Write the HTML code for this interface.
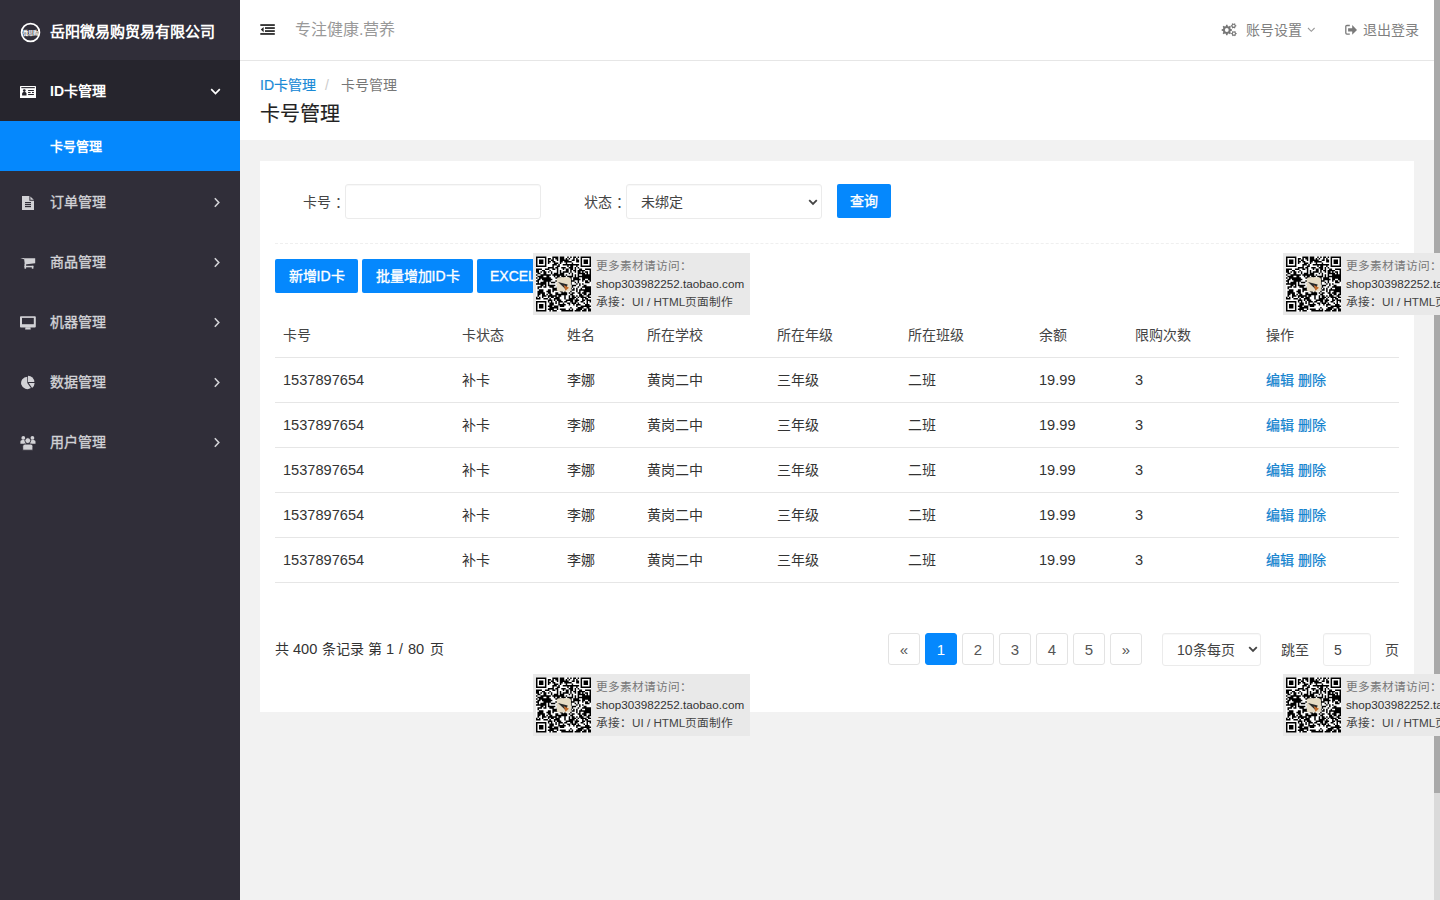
<!DOCTYPE html>
<html lang="zh-CN"><head><meta charset="utf-8">
<title>卡号管理</title>
<style>
*{margin:0;padding:0;box-sizing:border-box}
html,body{width:1440px;height:900px;overflow:hidden}
body{font-family:"Liberation Sans",sans-serif;font-size:14px;color:#333;background:#f2f2f2;position:relative}
.a{position:absolute;white-space:nowrap;line-height:20px}
#side{position:absolute;left:0;top:0;width:240px;height:900px;background:#302e39}
#m1{position:absolute;left:0;top:60px;width:240px;height:61px;background:#26252d}
#sub1{position:absolute;left:0;top:121px;width:240px;height:50px;background:#0588fd}
.mt{color:#d2d2d6;font-size:14px;left:50px;-webkit-text-stroke:0.35px #d2d2d6}
.dg{font-size:14.6px}
#hdr{position:absolute;left:240px;top:0;width:1194px;height:61px;background:#fff;border-bottom:1px solid #e6e6e6}
#crumb{position:absolute;left:240px;top:61px;width:1194px;height:79px;background:#fff}
#card{position:absolute;left:260px;top:161px;width:1154px;height:551px;background:#fff}
#sb{position:absolute;left:1434px;top:0;width:6px;height:900px;background:#dadada}
#sbt{position:absolute;left:1434px;top:0;width:6px;height:793px;background:#a9a9a9}
.inp{position:absolute;background:#fff;border:1px solid #ebebeb;border-radius:3px;box-shadow:inset 0 1px 1px rgba(0,0,0,.03)}
.btn{position:absolute;background:#0588fd;color:#fff;border-radius:2px;text-align:center;-webkit-text-stroke:0.35px #fff;line-height:34px;font-size:14px;white-space:nowrap;overflow:hidden}
.hl{position:absolute;left:275px;width:1124px;height:1px;background:#e6e6e6}
.th{color:#444}
.td{color:#333}
.lk{color:#1584cf;-webkit-text-stroke:0.25px #1584cf}
.pg{position:absolute;top:633px;width:32px;height:32px;border:1px solid #e3e3e3;border-radius:3px;text-align:center;line-height:32px;font-size:15px;color:#555;background:#fff}
.wm{position:absolute;width:217px;height:62px;background:#e9e9e9;overflow:hidden;white-space:nowrap}
.wm svg{position:absolute;left:3px;top:3px}
.wm .l{position:absolute;left:63px;font-size:11.7px;line-height:18px;color:#444}
</style></head><body>
<svg width="0" height="0" style="position:absolute"><defs><symbol id="qr" viewBox="0 0 37 37"><rect width="37" height="37" fill="#fff"/><path d="M0 0h7v1h-7zM11 0h4v1h-4zM16 0h3v1h-3zM21 0h1v1h-1zM23 0h1v1h-1zM25 0h2v1h-2zM28 0h1v1h-1zM30 0h7v1h-7zM0 1h1v1h-1zM6 1h1v1h-1zM8 1h2v1h-2zM11 1h1v1h-1zM13 1h2v1h-2zM16 1h3v1h-3zM20 1h1v1h-1zM22 1h1v1h-1zM25 1h1v1h-1zM27 1h1v1h-1zM30 1h1v1h-1zM36 1h1v1h-1zM0 2h1v1h-1zM2 2h3v1h-3zM6 2h1v1h-1zM8 2h1v1h-1zM10 2h2v1h-2zM14 2h1v1h-1zM16 2h6v1h-6zM24 2h2v1h-2zM27 2h2v1h-2zM30 2h1v1h-1zM32 2h3v1h-3zM36 2h1v1h-1zM0 3h1v1h-1zM2 3h3v1h-3zM6 3h1v1h-1zM8 3h2v1h-2zM11 3h2v1h-2zM16 3h2v1h-2zM19 3h5v1h-5zM27 3h2v1h-2zM30 3h1v1h-1zM32 3h3v1h-3zM36 3h1v1h-1zM0 4h1v1h-1zM2 4h3v1h-3zM6 4h1v1h-1zM8 4h1v1h-1zM12 4h3v1h-3zM16 4h1v1h-1zM20 4h1v1h-1zM24 4h1v1h-1zM30 4h1v1h-1zM32 4h3v1h-3zM36 4h1v1h-1zM0 5h1v1h-1zM6 5h1v1h-1zM11 5h3v1h-3zM15 5h1v1h-1zM18 5h11v1h-11zM30 5h1v1h-1zM36 5h1v1h-1zM0 6h7v1h-7zM11 6h1v1h-1zM14 6h2v1h-2zM21 6h1v1h-1zM23 6h2v1h-2zM27 6h1v1h-1zM30 6h7v1h-7zM8 7h4v1h-4zM13 7h2v1h-2zM17 7h3v1h-3zM22 7h3v1h-3zM26 7h1v1h-1zM28 7h1v1h-1zM0 8h4v1h-4zM6 8h3v1h-3zM11 8h2v1h-2zM14 8h1v1h-1zM18 8h1v1h-1zM20 8h2v1h-2zM23 8h2v1h-2zM26 8h1v1h-1zM29 8h2v1h-2zM33 8h4v1h-4zM0 9h2v1h-2zM4 9h2v1h-2zM9 9h1v1h-1zM14 9h1v1h-1zM16 9h1v1h-1zM20 9h2v1h-2zM23 9h1v1h-1zM25 9h2v1h-2zM28 9h5v1h-5zM36 9h1v1h-1zM0 10h2v1h-2zM3 10h1v1h-1zM5 10h2v1h-2zM8 10h1v1h-1zM10 10h1v1h-1zM14 10h1v1h-1zM16 10h1v1h-1zM18 10h4v1h-4zM23 10h1v1h-1zM26 10h1v1h-1zM28 10h2v1h-2zM31 10h1v1h-1zM33 10h2v1h-2zM36 10h1v1h-1zM1 11h2v1h-2zM5 11h2v1h-2zM10 11h1v1h-1zM12 11h3v1h-3zM16 11h3v1h-3zM22 11h1v1h-1zM24 11h1v1h-1zM28 11h5v1h-5zM34 11h1v1h-1zM36 11h1v1h-1zM0 12h1v1h-1zM3 12h7v1h-7zM11 12h8v1h-8zM20 12h1v1h-1zM24 12h1v1h-1zM26 12h1v1h-1zM28 12h1v1h-1zM31 12h6v1h-6zM1 13h4v1h-4zM7 13h2v1h-2zM12 13h1v1h-1zM14 13h2v1h-2zM17 13h3v1h-3zM21 13h4v1h-4zM26 13h1v1h-1zM28 13h9v1h-9zM0 14h1v1h-1zM2 14h8v1h-8zM13 14h4v1h-4zM18 14h1v1h-1zM22 14h2v1h-2zM25 14h4v1h-4zM31 14h6v1h-6zM1 15h2v1h-2zM4 15h7v1h-7zM17 15h1v1h-1zM23 15h1v1h-1zM25 15h5v1h-5zM31 15h2v1h-2zM35 15h2v1h-2zM0 16h2v1h-2zM5 16h5v1h-5zM13 16h3v1h-3zM17 16h1v1h-1zM20 16h2v1h-2zM23 16h3v1h-3zM28 16h1v1h-1zM31 16h1v1h-1zM33 16h2v1h-2zM36 16h1v1h-1zM1 17h1v1h-1zM3 17h4v1h-4zM8 17h1v1h-1zM10 17h3v1h-3zM17 17h2v1h-2zM20 17h4v1h-4zM26 17h1v1h-1zM28 17h1v1h-1zM33 17h3v1h-3zM0 18h7v1h-7zM8 18h1v1h-1zM14 18h1v1h-1zM16 18h1v1h-1zM19 18h5v1h-5zM27 18h1v1h-1zM29 18h1v1h-1zM31 18h1v1h-1zM3 19h2v1h-2zM6 19h1v1h-1zM8 19h5v1h-5zM17 19h2v1h-2zM22 19h1v1h-1zM24 19h3v1h-3zM29 19h1v1h-1zM32 19h2v1h-2zM1 20h3v1h-3zM5 20h2v1h-2zM9 20h3v1h-3zM14 20h2v1h-2zM20 20h2v1h-2zM24 20h1v1h-1zM28 20h1v1h-1zM31 20h6v1h-6zM1 21h1v1h-1zM11 21h6v1h-6zM19 21h5v1h-5zM25 21h1v1h-1zM27 21h1v1h-1zM30 21h1v1h-1zM33 21h4v1h-4zM2 22h3v1h-3zM8 22h2v1h-2zM11 22h4v1h-4zM16 22h4v1h-4zM21 22h2v1h-2zM24 22h2v1h-2zM27 22h1v1h-1zM29 22h8v1h-8zM1 23h4v1h-4zM7 23h3v1h-3zM11 23h1v1h-1zM16 23h2v1h-2zM19 23h1v1h-1zM23 23h1v1h-1zM27 23h1v1h-1zM29 23h1v1h-1zM32 23h5v1h-5zM1 24h5v1h-5zM8 24h2v1h-2zM13 24h2v1h-2zM17 24h4v1h-4zM22 24h1v1h-1zM24 24h2v1h-2zM28 24h2v1h-2zM31 24h3v1h-3zM36 24h1v1h-1zM1 25h2v1h-2zM4 25h2v1h-2zM7 25h1v1h-1zM9 25h2v1h-2zM13 25h8v1h-8zM23 25h2v1h-2zM29 25h2v1h-2zM32 25h2v1h-2zM35 25h2v1h-2zM1 26h1v1h-1zM4 26h3v1h-3zM8 26h6v1h-6zM15 26h2v1h-2zM19 26h1v1h-1zM22 26h1v1h-1zM24 26h2v1h-2zM27 26h1v1h-1zM29 26h3v1h-3zM34 26h2v1h-2zM0 27h1v1h-1zM2 27h1v1h-1zM4 27h1v1h-1zM8 27h1v1h-1zM10 27h2v1h-2zM13 27h3v1h-3zM19 27h1v1h-1zM22 27h1v1h-1zM24 27h3v1h-3zM28 27h1v1h-1zM30 27h4v1h-4zM35 27h2v1h-2zM0 28h3v1h-3zM5 28h3v1h-3zM9 28h1v1h-1zM12 28h4v1h-4zM19 28h1v1h-1zM22 28h4v1h-4zM27 28h1v1h-1zM31 28h1v1h-1zM33 28h2v1h-2zM8 29h3v1h-3zM12 29h1v1h-1zM14 29h3v1h-3zM20 29h5v1h-5zM26 29h3v1h-3zM31 29h2v1h-2zM34 29h3v1h-3zM0 30h7v1h-7zM8 30h1v1h-1zM10 30h1v1h-1zM13 30h1v1h-1zM15 30h3v1h-3zM19 30h2v1h-2zM23 30h2v1h-2zM26 30h2v1h-2zM30 30h2v1h-2zM34 30h1v1h-1zM36 30h1v1h-1zM0 31h1v1h-1zM6 31h1v1h-1zM9 31h3v1h-3zM13 31h1v1h-1zM15 31h1v1h-1zM18 31h1v1h-1zM21 31h2v1h-2zM24 31h3v1h-3zM28 31h1v1h-1zM32 31h1v1h-1zM34 31h1v1h-1zM0 32h1v1h-1zM2 32h3v1h-3zM6 32h1v1h-1zM9 32h3v1h-3zM15 32h5v1h-5zM22 32h1v1h-1zM25 32h1v1h-1zM27 32h3v1h-3zM33 32h3v1h-3zM0 33h1v1h-1zM2 33h3v1h-3zM6 33h1v1h-1zM8 33h3v1h-3zM12 33h3v1h-3zM16 33h3v1h-3zM27 33h1v1h-1zM30 33h7v1h-7zM0 34h1v1h-1zM2 34h3v1h-3zM6 34h1v1h-1zM9 34h6v1h-6zM23 34h1v1h-1zM28 34h4v1h-4zM34 34h2v1h-2zM0 35h1v1h-1zM6 35h1v1h-1zM8 35h4v1h-4zM14 35h1v1h-1zM16 35h4v1h-4zM22 35h1v1h-1zM24 35h1v1h-1zM27 35h4v1h-4zM32 35h2v1h-2zM35 35h2v1h-2zM0 36h7v1h-7zM9 36h1v1h-1zM11 36h3v1h-3zM17 36h8v1h-8zM26 36h4v1h-4zM31 36h3v1h-3zM35 36h2v1h-2z" fill="#000"/><rect x="14" y="14" width="9.5" height="9.5" rx="1.5" fill="#e6dcc6"/><path d="M14.8 17.2l6.5 1.6l-1.2 3.4z" fill="#2a2a2a"/><path d="M18.6 19.2l3.6 1.8l-2.4 2z" fill="#c26a2a"/></symbol></defs></svg>

<div id="side">
  <svg class="a" style="left:19.5px;top:21.5px" width="21" height="21" viewBox="0 0 21 21"><circle cx="10.5" cy="10.5" r="8.9" fill="none" stroke="#fff" stroke-width="1.8"/><text x="10.5" y="12.6" font-size="5.2" font-weight="bold" fill="#fff" text-anchor="middle" style="font-family:'Liberation Sans',sans-serif">微易购</text></svg>
  <div class="a" style="left:50px;top:20.5px;font-size:15px;font-weight:bold;color:#fff;line-height:22px">岳阳微易购贸易有限公司</div>

  <div id="m1"></div>
  <svg class="a" style="left:20px;top:86px" width="16" height="12.4" viewBox="0 0 16 12.4"><rect x="0" y="0" width="16" height="12.3" rx="0.6" fill="#fff"/><g fill="#26252d"><rect x="1.3" y="1.1" width="13.5" height="1.1"/><circle cx="4.3" cy="4.6" r="1.35"/><path d="M2.1 9.6V7.7c0-1 .8-1.6 2.2-1.6s2.2.6 2.2 1.6V9.6z"/><rect x="8.1" y="4" width="5.8" height="1.05"/><rect x="8.1" y="6" width="2.5" height="1.05"/><rect x="12" y="6" width="1.9" height="1.05"/><rect x="8.1" y="8" width="5.8" height="1.05"/></g></svg>
  <div class="a mt" style="top:81px;color:#fff;font-weight:bold;-webkit-text-stroke:0">ID卡管理</div>
  <svg class="a" style="left:210px;top:88px" width="11" height="7" viewBox="0 0 11 7"><path d="M1.2 1.2l4.3 4.3l4.3-4.3" fill="none" stroke="#fff" stroke-width="1.7"/></svg>

  <div id="sub1"></div>
  <div class="a" style="left:50px;top:136.5px;color:#fff;font-weight:bold;font-size:13px">卡号管理</div>

  <!-- 订单管理 -->
  <svg class="a" style="left:22px;top:196px" width="12" height="14" viewBox="0 0 12 14"><path d="M0 0h7.4v4.8h4.6v9.2h-12z" fill="#d2d2d6"/><path d="M8.4 0.4l3.4 3.4h-3.4z" fill="#d2d2d6"/><rect x="3" y="6" width="6" height="1.2" fill="#302e39"/><rect x="3" y="8" width="6" height="1.2" fill="#302e39"/><rect x="3" y="10" width="6" height="1.2" fill="#302e39"/></svg>
  <div class="a mt" style="top:192px">订单管理</div>
  <svg class="a" style="left:213px;top:197px" width="8" height="11" viewBox="0 0 8 11"><path d="M1.8 1.2l4 4.3l-4 4.3" fill="none" stroke="#d2d2d6" stroke-width="1.6"/></svg>

  <!-- 商品管理 -->
  <svg class="a" style="left:20px;top:257px" width="16" height="13" viewBox="0 0 16 13"><g fill="#d2d2d6"><path d="M0.4 1.5L4.2 0.9V2.3z"/><path d="M4 1.3H15.2V6.3L4.8 7.4z"/><rect x="4.5" y="8.8" width="8.8" height="1.5"/><rect x="4.5" y="6.8" width="1.6" height="4.9"/><rect x="11.8" y="8.8" width="1.6" height="2.9"/></g></svg>
  <div class="a mt" style="top:252px">商品管理</div>
  <svg class="a" style="left:213px;top:257px" width="8" height="11" viewBox="0 0 8 11"><path d="M1.8 1.2l4 4.3l-4 4.3" fill="none" stroke="#d2d2d6" stroke-width="1.6"/></svg>

  <!-- 机器管理 -->
  <svg class="a" style="left:20px;top:315.5px" width="16" height="14" viewBox="0 0 16 14"><rect x="0" y="0.2" width="15.8" height="11.2" rx="0.9" fill="#d2d2d6"/><rect x="2" y="1.9" width="11.8" height="6.3" fill="#302e39"/><path d="M5.5 11.3H10.4L10.8 13.5H5.1Z" fill="#d2d2d6"/></svg>
  <div class="a mt" style="top:312px">机器管理</div>
  <svg class="a" style="left:213px;top:317px" width="8" height="11" viewBox="0 0 8 11"><path d="M1.8 1.2l4 4.3l-4 4.3" fill="none" stroke="#d2d2d6" stroke-width="1.6"/></svg>

  <!-- 数据管理 -->
  <svg class="a" style="left:20px;top:375px" width="16" height="15" viewBox="0 0 16 15"><g fill="#d2d2d6"><path d="M7.3 1.8A6.2 6.2 0 1 0 10.86 13.08L7.3 8Z"/><path d="M8 0.7A6.3 6.3 0 0 1 14.3 7H8Z"/><path d="M14.6 8.1A6.1 6.1 0 0 1 12.1 13L8.7 8.1Z"/></g></svg>
  <div class="a mt" style="top:372px">数据管理</div>
  <svg class="a" style="left:213px;top:377px" width="8" height="11" viewBox="0 0 8 11"><path d="M1.8 1.2l4 4.3l-4 4.3" fill="none" stroke="#d2d2d6" stroke-width="1.6"/></svg>

  <!-- 用户管理 -->
  <svg class="a" style="left:20px;top:435px" width="16" height="16" viewBox="0 0 16 16"><g fill="#d2d2d6"><circle cx="3.3" cy="2.9" r="1.9"/><circle cx="12.4" cy="2.9" r="1.9"/><path d="M0.4 8.7V7c0-1.2.8-1.9 2-1.9h1.8c1 0 1.8.7 1.8 1.9v1.7z"/><path d="M15.5 8.7V7c0-1.2-.8-1.9-2-1.9h-1.8c-1 0-1.8.7-1.8 1.9v1.7z"/></g><g fill="#d2d2d6" stroke="#302e39" stroke-width="0.9"><circle cx="7.8" cy="5.6" r="2.9"/><path d="M2.7 15.2V11.6c0-1.6 1-2.5 2.6-2.5h5c1.6 0 2.6.9 2.6 2.5v3.6z"/></g></svg>
  <div class="a mt" style="top:432px">用户管理</div>
  <svg class="a" style="left:213px;top:437px" width="8" height="11" viewBox="0 0 8 11"><path d="M1.8 1.2l4 4.3l-4 4.3" fill="none" stroke="#d2d2d6" stroke-width="1.6"/></svg>
</div>

<div id="hdr"></div>
<svg class="a" style="left:260px;top:24px" width="15" height="11" viewBox="0 0 15 11"><rect x="0.3" y="0.2" width="14.5" height="1.7" fill="#222"/><rect x="5" y="3.2" width="9.8" height="1.7" fill="#222"/><rect x="5" y="6.2" width="9.8" height="1.7" fill="#222"/><rect x="0.3" y="9.1" width="14.5" height="1.7" fill="#222"/><path d="M3.6 3v5.2l-2.8-2.6z" fill="#222"/></svg>
<div class="a" style="left:295px;top:19px;font-size:16px;color:#999;line-height:22px">专注健康.营养</div>

<svg class="a" style="left:1221px;top:23px" width="16" height="14" viewBox="0 0 16 14"><path fill="#777" fill-rule="evenodd" d="M9.67 5.99 L10.95 6.29 L10.95 7.71 L9.67 8.01 L9.25 9.02 L9.94 10.14 L8.94 11.14 L7.82 10.45 L6.81 10.87 L6.51 12.15 L5.09 12.15 L4.79 10.87 L3.78 10.45 L2.66 11.14 L1.66 10.14 L2.35 9.02 L1.93 8.01 L0.65 7.71 L0.65 6.29 L1.93 5.99 L2.35 4.98 L1.66 3.86 L2.66 2.86 L3.78 3.55 L4.79 3.13 L5.09 1.85 L6.51 1.85 L6.81 3.13 L7.82 3.55 L8.94 2.86 L9.94 3.86 L9.25 4.98ZM7.70 7.00A1.9 1.9 0 1 0 3.90 7.00A1.9 1.9 0 1 0 7.70 7.00ZM14.70 2.16 L15.36 2.31 L15.36 3.29 L14.70 3.44 L14.21 4.30 L14.40 4.94 L13.55 5.43 L13.10 4.94 L12.10 4.94 L11.65 5.43 L10.80 4.94 L10.99 4.30 L10.50 3.44 L9.84 3.29 L9.84 2.31 L10.50 2.16 L10.99 1.30 L10.80 0.66 L11.65 0.17 L12.10 0.66 L13.10 0.66 L13.55 0.17 L14.40 0.66 L14.21 1.30ZM13.65 2.80A1.05 1.05 0 1 0 11.55 2.80A1.05 1.05 0 1 0 13.65 2.80ZM15.00 9.96 L15.66 10.11 L15.66 11.09 L15.00 11.24 L14.51 12.10 L14.70 12.74 L13.85 13.23 L13.40 12.74 L12.40 12.74 L11.95 13.23 L11.10 12.74 L11.29 12.10 L10.80 11.24 L10.14 11.09 L10.14 10.11 L10.80 9.96 L11.29 9.10 L11.10 8.46 L11.95 7.97 L12.40 8.46 L13.40 8.46 L13.85 7.97 L14.70 8.46 L14.51 9.10ZM13.95 10.60A1.05 1.05 0 1 0 11.85 10.60A1.05 1.05 0 1 0 13.95 10.60Z"/></svg>
<div class="a" style="left:1246px;top:20px;color:#808080;font-size:14px">账号设置</div>
<svg class="a" style="left:1307px;top:27px" width="9" height="6" viewBox="0 0 9 6"><path d="M1 1l3.3 3.3l3.3-3.3" fill="none" stroke="#999" stroke-width="1.1"/></svg>
<svg class="a" style="left:1344px;top:24px" width="14" height="12" viewBox="0 0 14 12"><path d="M5.8 1.5H2.9c-.6 0-1.1.5-1.1 1.1V9.1c0 .6.5 1.1 1.1 1.1H5.8" fill="none" stroke="#7a7a7a" stroke-width="1.3"/><path d="M4.1 4.3H8.2V1L13 5.9L8.2 10.8V7.6H4.1Z" fill="#7a7a7a"/></svg>
<div class="a" style="left:1363px;top:20px;color:#808080;font-size:14px">退出登录</div>

<div id="crumb"></div>
<div class="a" style="left:260px;top:75px;color:#1a8ad6;font-size:14px;-webkit-text-stroke:0.2px #1a8ad6">ID卡管理</div>
<div class="a" style="left:325px;top:75px;color:#ccc;font-size:14px">/</div>
<div class="a" style="left:341px;top:75px;color:#777;font-size:14px">卡号管理</div>
<div class="a" style="left:260px;top:101px;color:#222;font-size:20px;line-height:26px;-webkit-text-stroke:0.15px #222">卡号管理</div>

<div id="card"></div>
<div class="a" style="left:303px;top:192px;color:#444">卡号</div><div class="a" style="left:334.5px;top:192px;color:#444">：</div>
<div class="inp" style="left:345px;top:184px;width:196px;height:35px"></div>
<div class="a" style="left:584px;top:192px;color:#444">状态</div><div class="a" style="left:615.5px;top:192px;color:#444">：</div>
<div class="inp" style="left:626px;top:184px;width:196px;height:35px"></div>
<div class="a" style="left:641px;top:192px;color:#444">未绑定</div>
<svg class="a" style="left:808px;top:199px" width="10" height="7" viewBox="0 0 10 7"><path d="M1.2 1.2l3.8 3.8l3.8-3.8" fill="none" stroke="#444" stroke-width="1.8"/></svg>
<div class="btn" style="left:837px;top:184px;width:54px;height:34px">查询</div>

<div class="a" style="left:275px;top:243px;width:1124px;height:1px;border-top:1px dashed #efefef"></div>

<div class="btn" style="left:275px;top:259px;width:83px;height:34px">新增ID卡</div>
<div class="btn" style="left:362px;top:259px;width:111px;height:34px">批量增加ID卡</div>
<div class="btn" style="left:477px;top:259px;width:100px;height:34px;text-align:left;padding-left:13px">EXCEL导入</div>

<!-- table -->
<div class="a th" style="left:283px;top:325px">卡号</div>
<div class="a th" style="left:462px;top:325px">卡状态</div>
<div class="a th" style="left:567px;top:325px">姓名</div>
<div class="a th" style="left:647px;top:325px">所在学校</div>
<div class="a th" style="left:777px;top:325px">所在年级</div>
<div class="a th" style="left:908px;top:325px">所在班级</div>
<div class="a th" style="left:1039px;top:325px">余额</div>
<div class="a th" style="left:1135px;top:325px">限购次数</div>
<div class="a th" style="left:1266px;top:325px">操作</div>
<div class="hl" style="top:357px"></div>
<div class="a td dg" style="left:283px;top:370px">1537897654</div><div class="a td" style="left:462px;top:370px">补卡</div><div class="a td" style="left:567px;top:370px">李娜</div><div class="a td" style="left:647px;top:370px">黄岗二中</div><div class="a td" style="left:777px;top:370px">三年级</div><div class="a td" style="left:908px;top:370px">二班</div><div class="a td dg" style="left:1039px;top:370px">19.99</div><div class="a td dg" style="left:1135px;top:370px">3</div><div class="a lk" style="left:1266px;top:370px">编辑 删除</div><div class="hl" style="top:402px"></div>
<div class="a td dg" style="left:283px;top:415px">1537897654</div><div class="a td" style="left:462px;top:415px">补卡</div><div class="a td" style="left:567px;top:415px">李娜</div><div class="a td" style="left:647px;top:415px">黄岗二中</div><div class="a td" style="left:777px;top:415px">三年级</div><div class="a td" style="left:908px;top:415px">二班</div><div class="a td dg" style="left:1039px;top:415px">19.99</div><div class="a td dg" style="left:1135px;top:415px">3</div><div class="a lk" style="left:1266px;top:415px">编辑 删除</div><div class="hl" style="top:447px"></div>
<div class="a td dg" style="left:283px;top:460px">1537897654</div><div class="a td" style="left:462px;top:460px">补卡</div><div class="a td" style="left:567px;top:460px">李娜</div><div class="a td" style="left:647px;top:460px">黄岗二中</div><div class="a td" style="left:777px;top:460px">三年级</div><div class="a td" style="left:908px;top:460px">二班</div><div class="a td dg" style="left:1039px;top:460px">19.99</div><div class="a td dg" style="left:1135px;top:460px">3</div><div class="a lk" style="left:1266px;top:460px">编辑 删除</div><div class="hl" style="top:492px"></div>
<div class="a td dg" style="left:283px;top:505px">1537897654</div><div class="a td" style="left:462px;top:505px">补卡</div><div class="a td" style="left:567px;top:505px">李娜</div><div class="a td" style="left:647px;top:505px">黄岗二中</div><div class="a td" style="left:777px;top:505px">三年级</div><div class="a td" style="left:908px;top:505px">二班</div><div class="a td dg" style="left:1039px;top:505px">19.99</div><div class="a td dg" style="left:1135px;top:505px">3</div><div class="a lk" style="left:1266px;top:505px">编辑 删除</div><div class="hl" style="top:537px"></div>
<div class="a td dg" style="left:283px;top:550px">1537897654</div><div class="a td" style="left:462px;top:550px">补卡</div><div class="a td" style="left:567px;top:550px">李娜</div><div class="a td" style="left:647px;top:550px">黄岗二中</div><div class="a td" style="left:777px;top:550px">三年级</div><div class="a td" style="left:908px;top:550px">二班</div><div class="a td dg" style="left:1039px;top:550px">19.99</div><div class="a td dg" style="left:1135px;top:550px">3</div><div class="a lk" style="left:1266px;top:550px">编辑 删除</div><div class="hl" style="top:582px"></div>


<div class="a" style="left:275px;top:639px;color:#333">共</div><div class="a" style="left:293px;top:639px;color:#333;font-size:14.6px">400</div><div class="a" style="left:322px;top:639px;color:#333">条记录</div><div class="a" style="left:368px;top:639px;color:#333">第</div><div class="a" style="left:386px;top:639px;color:#333;font-size:14.6px">1</div><div class="a" style="left:399px;top:639px;color:#333">/</div><div class="a" style="left:408px;top:639px;color:#333;font-size:14.6px">80</div><div class="a" style="left:430px;top:639px;color:#333">页</div>

<div class="pg" style="left:888px">«</div>
<div class="pg" style="left:925px;background:#0588fd;border-color:#0588fd;color:#fff">1</div>
<div class="pg" style="left:962px">2</div>
<div class="pg" style="left:999px">3</div>
<div class="pg" style="left:1036px">4</div>
<div class="pg" style="left:1073px">5</div>
<div class="pg" style="left:1110px">»</div>
<div class="inp" style="left:1162px;top:633px;width:99px;height:33px"></div>
<div class="a" style="left:1177px;top:640px;color:#444">10条每页</div>
<svg class="a" style="left:1248px;top:646px" width="10" height="7" viewBox="0 0 10 7"><path d="M1.2 1.2l3.8 3.8l3.8-3.8" fill="none" stroke="#444" stroke-width="1.8"/></svg>
<div class="a" style="left:1281px;top:640px;color:#444">跳至</div>
<div class="inp" style="left:1323px;top:633px;width:48px;height:33px"></div>
<div class="a" style="left:1334px;top:640px;color:#444">5</div>
<div class="a" style="left:1385px;top:640px;color:#444">页</div>

<div id="sb"></div><div id="sbt"></div>

<div class="wm" style="left:533px;top:253px"><svg width="55" height="56"><use href="#qr"/></svg><div class="l" style="top:4px;color:#777">更多素材请访问：</div><div class="l" style="top:22px;color:#333">shop303982252.taobao.com</div><div class="l" style="top:40px">承接：UI / HTML页面制作</div></div>
<div class="wm" style="left:1283px;top:253px"><svg width="55" height="56"><use href="#qr"/></svg><div class="l" style="top:4px;color:#777">更多素材请访问：</div><div class="l" style="top:22px;color:#333">shop303982252.taobao.com</div><div class="l" style="top:40px">承接：UI / HTML页面制作</div></div>
<div class="wm" style="left:533px;top:674px"><svg width="55" height="56"><use href="#qr"/></svg><div class="l" style="top:4px;color:#777">更多素材请访问：</div><div class="l" style="top:22px;color:#333">shop303982252.taobao.com</div><div class="l" style="top:40px">承接：UI / HTML页面制作</div></div>
<div class="wm" style="left:1283px;top:674px"><svg width="55" height="56"><use href="#qr"/></svg><div class="l" style="top:4px;color:#777">更多素材请访问：</div><div class="l" style="top:22px;color:#333">shop303982252.taobao.com</div><div class="l" style="top:40px">承接：UI / HTML页面制作</div></div>

</body></html>
